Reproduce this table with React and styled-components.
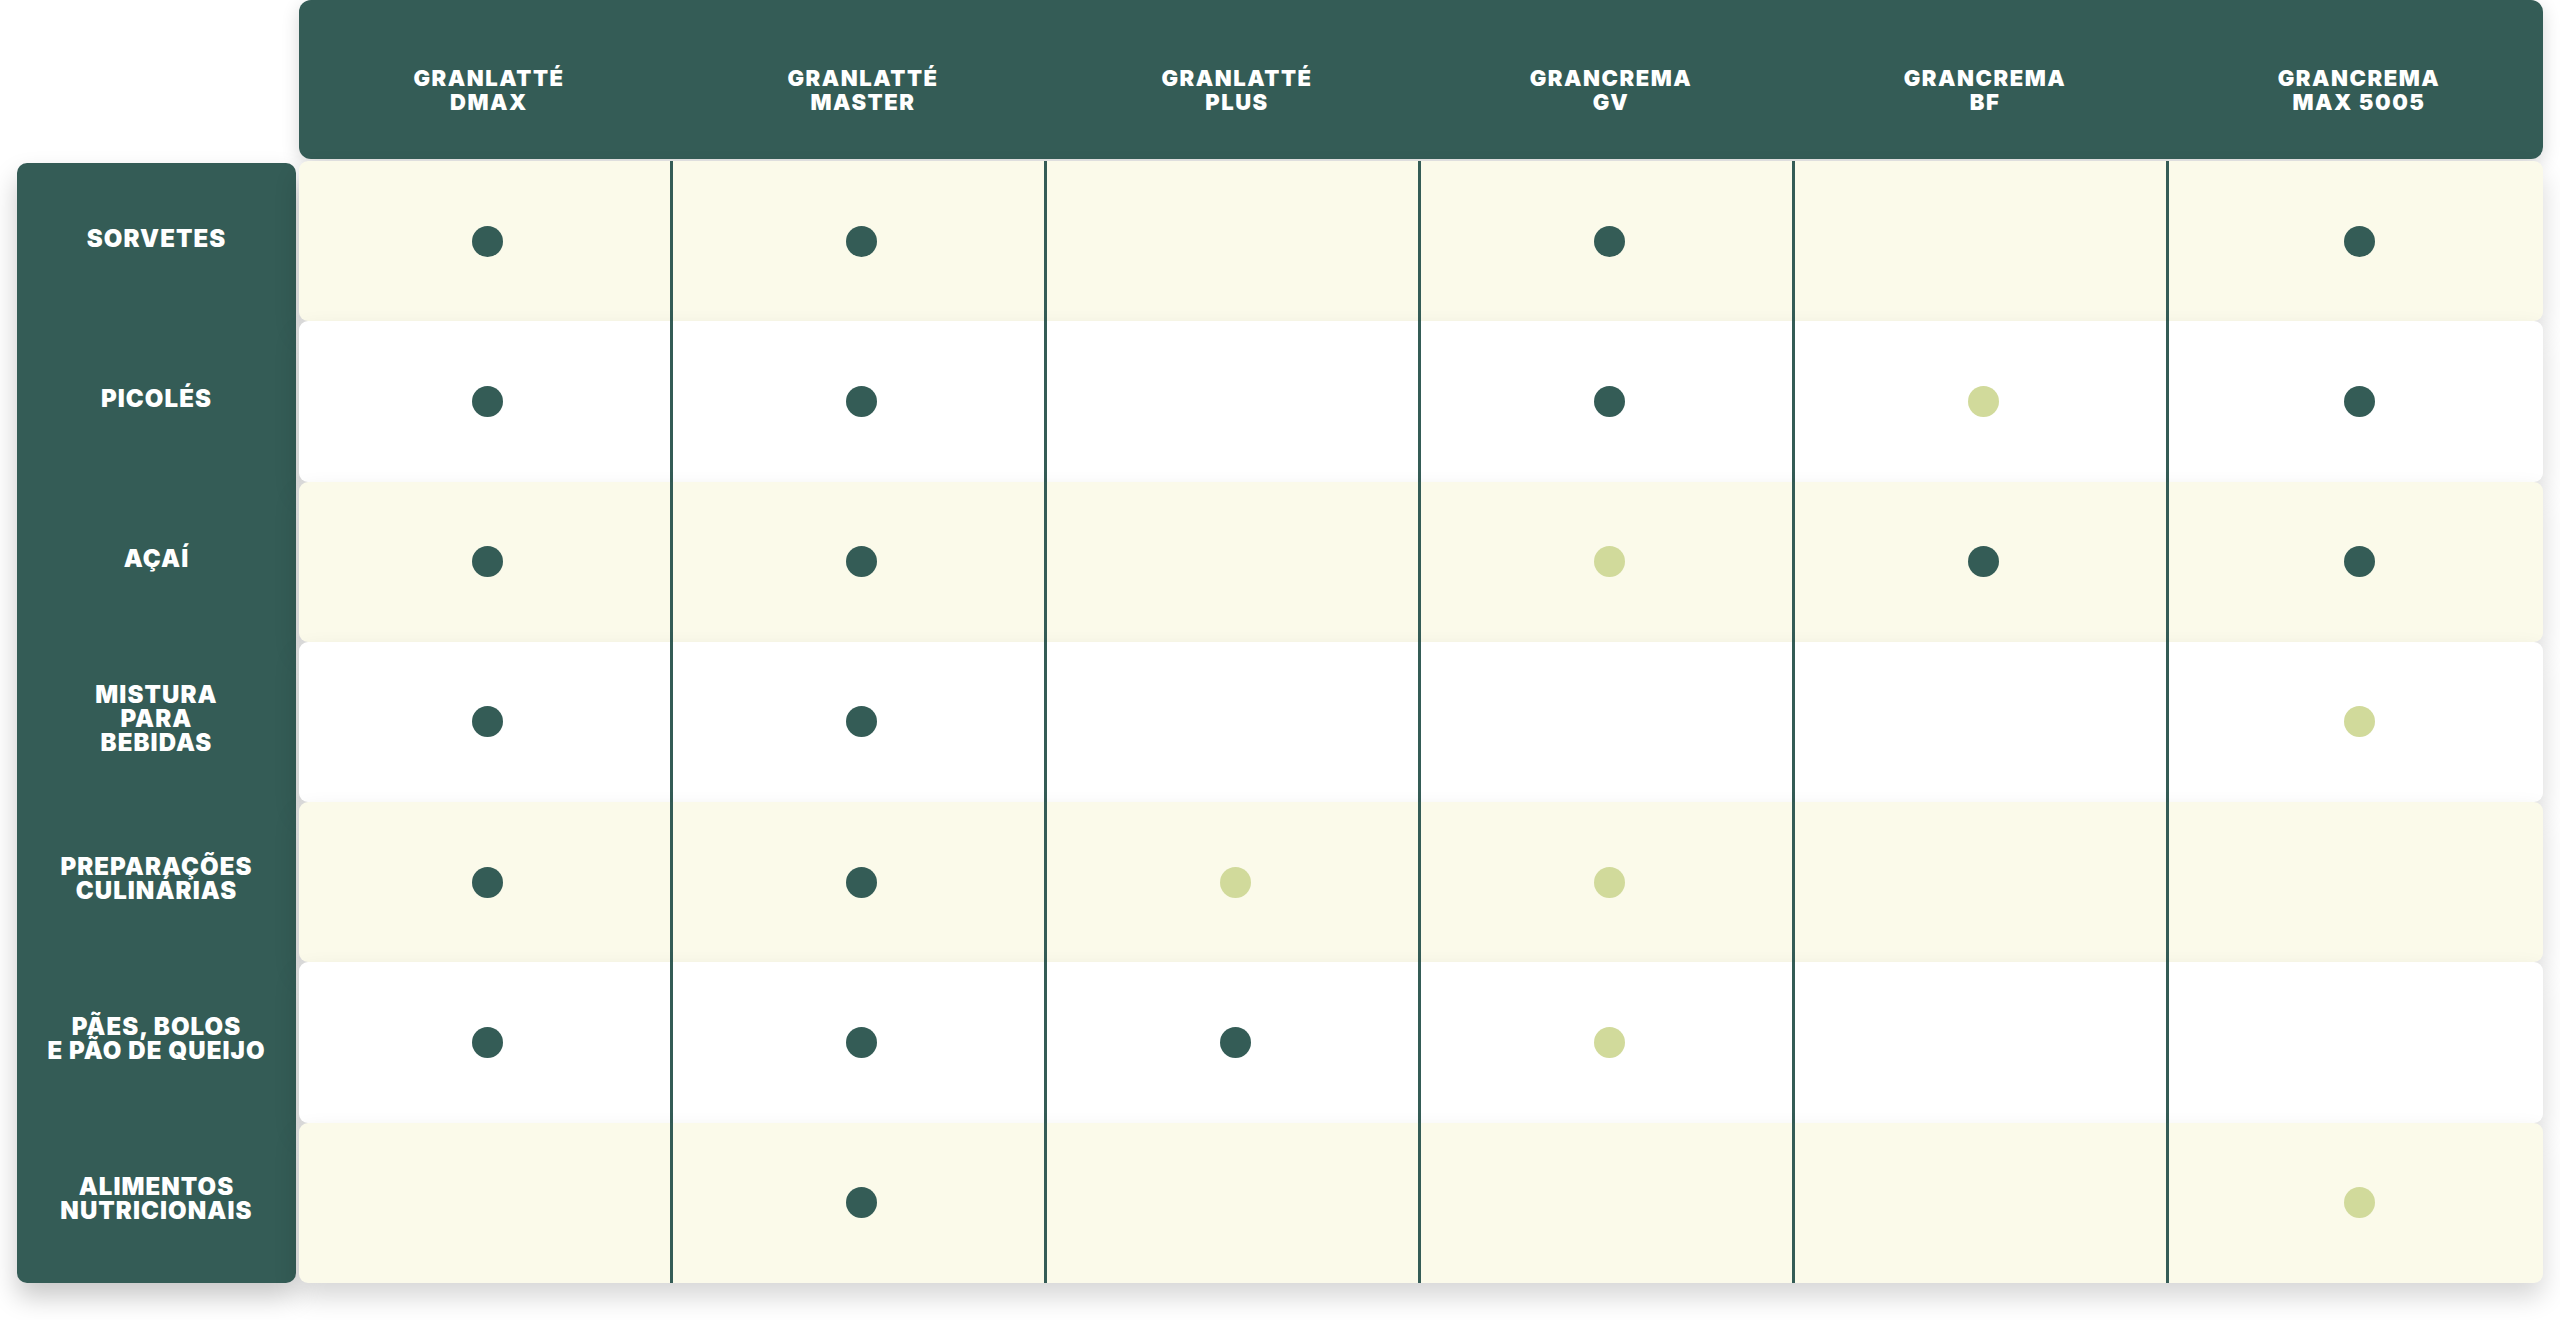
import React from "react";
import styled, { createGlobalStyle } from "styled-components";

const GlobalStyle = createGlobalStyle`
  html, body {
    margin: 0;
    padding: 0;
    background: #ffffff;
  }
  body {
    font-family: Inter, "Open Sans", "Liberation Sans", sans-serif;
  }
`;

const GREEN = "#345c56";
const LIGHT = "#d1da9b";
const CREAM = "#fbfaea";

const products = [
  ["GRANLATTÉ", "DMAX"],
  ["GRANLATTÉ", "MASTER"],
  ["GRANLATTÉ", "PLUS"],
  ["GRANCREMA", "GV"],
  ["GRANCREMA", "BF"],
  ["GRANCREMA", "MAX 5005"],
];

// d = dark dot, l = light dot, "" = nothing
const rows = [
  { label: ["SORVETES"], marks: ["d", "d", "", "d", "", "d"] },
  { label: ["PICOLÉS"], marks: ["d", "d", "", "d", "l", "d"] },
  { label: ["AÇAÍ"], marks: ["d", "d", "", "l", "d", "d"] },
  { label: ["MISTURA", "PARA", "BEBIDAS"], marks: ["d", "d", "", "", "", "l"] },
  { label: ["PREPARAÇÕES", "CULINÁRIAS"], marks: ["d", "d", "l", "l", "", ""] },
  { label: ["PÃES, BOLOS", "E PÃO DE QUEIJO"], marks: ["d", "d", "d", "l", "", ""] },
  { label: ["ALIMENTOS", "NUTRICIONAIS"], marks: ["", "d", "", "", "", "l"] },
];

const Page = styled.div`
  padding-left: 17px;
  width: 2560px;
  height: 1320px;
  box-sizing: border-box;
`;

const Layout = styled.div`
  display: grid;
  grid-template-columns: 279px 2244px;
  grid-template-rows: 159px 1122px;
  column-gap: 3px;
  row-gap: 2px;
`;

const Header = styled.div`
  grid-column: 2;
  display: grid;
  grid-template-columns: repeat(6, 1fr);
  background: ${GREEN};
  border-radius: 12px;
  box-shadow: 0 6px 18px rgba(0, 0, 0, 0.16);
`;

const HeadCell = styled.div`
  display: flex;
  flex-direction: column;
  align-items: center;
  justify-content: center;
  padding: 20px 0 0 6px;
  color: #ffffff;
  font-weight: 900;
  font-size: 22px;
  line-height: 24px;
  letter-spacing: 0.07em;
  text-align: center;
`;

const Sidebar = styled.div`
  margin-top: 2px;
  display: grid;
  grid-template-rows: repeat(7, 1fr);
  background: ${GREEN};
  border-radius: 10px;
  box-shadow: 0 14px 26px rgba(0, 0, 0, 0.22);
`;

const Label = styled.div`
  display: flex;
  flex-direction: column;
  align-items: center;
  justify-content: center;
  padding-bottom: 8px;
  color: #ffffff;
  font-weight: 900;
  font-size: 24px;
  line-height: 24px;
  letter-spacing: 0.045em;
  text-align: center;
`;

const Body = styled.div`
  display: grid;
  grid-template-rows: repeat(7, 1fr);
`;

const Row = styled.div`
  display: grid;
  grid-template-columns: repeat(6, 1fr);
  background: ${(p) => (p.$alt ? CREAM : "#ffffff")};
  border-radius: 9px;
  box-shadow: 0 14px 26px rgba(0, 0, 0, 0.16);
`;

const Cell = styled.div`
  display: flex;
  align-items: center;
  justify-content: center;
  padding-left: 6px;
  border-right: ${(p) => (p.$last ? "none" : `3px solid ${GREEN}`)};
`;

const Dot = styled.span`
  width: 31px;
  height: 31px;
  border-radius: 50%;
  background: ${(p) => (p.$light ? LIGHT : GREEN)};
`;

export default function App() {
  return (
    <>
      <GlobalStyle />
      <Page>
        <Layout>
          <div />
          <Header>
            {products.map((name) => (
              <HeadCell key={name.join(" ")}>
                <span>{name[0]}</span>
                <span>{name[1]}</span>
              </HeadCell>
            ))}
          </Header>
          <Sidebar>
            {rows.map((row) => (
              <Label key={row.label.join(" ")}>
                {row.label.map((line) => (
                  <span key={line}>{line}</span>
                ))}
              </Label>
            ))}
          </Sidebar>
          <Body>
            {rows.map((row, i) => (
              <Row key={row.label.join(" ")} $alt={i % 2 === 0}>
                {row.marks.map((m, j) => (
                  <Cell key={j} $last={j === 5}>
                    {m && <Dot $light={m === "l"} />}
                  </Cell>
                ))}
              </Row>
            ))}
          </Body>
        </Layout>
      </Page>
    </>
  );
}
